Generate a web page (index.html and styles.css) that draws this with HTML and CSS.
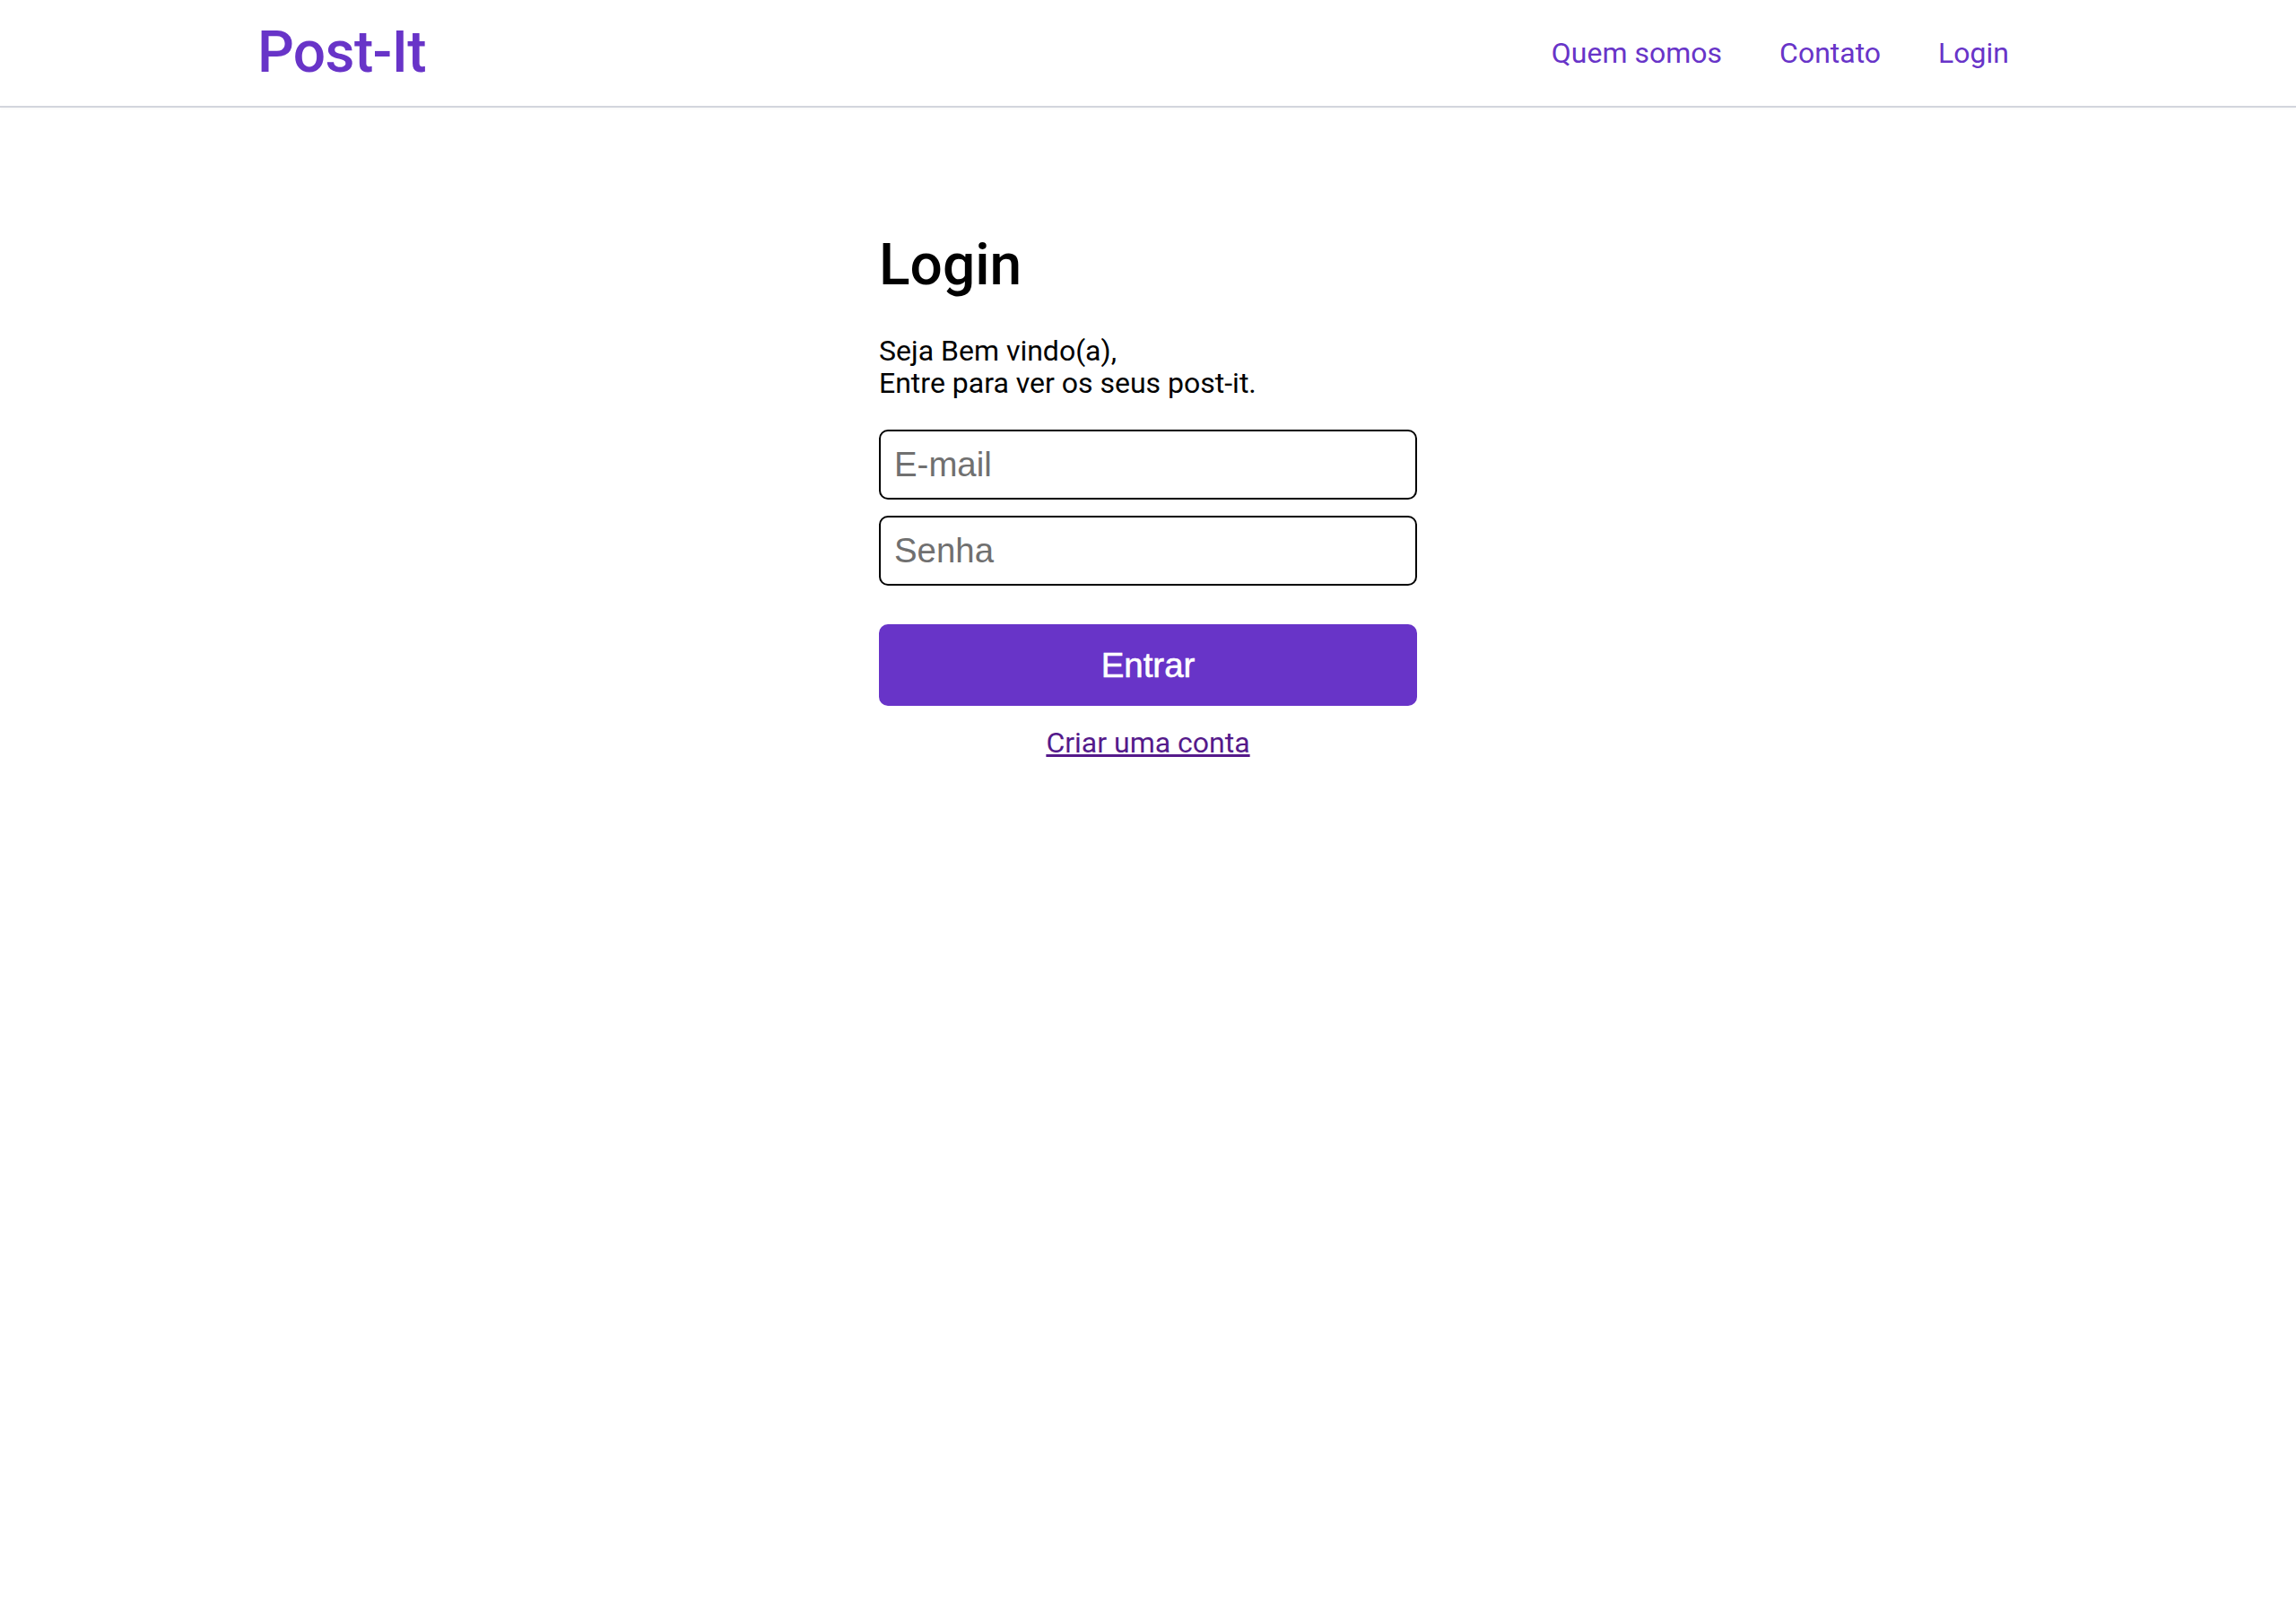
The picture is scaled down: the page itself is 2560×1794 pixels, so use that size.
FILE: index.html
```html
<!DOCTYPE html>
<html lang="pt-BR">
<head>
<meta charset="utf-8">
<title>Post-It | Login</title>
<link rel="stylesheet" href="styles.css">
</head>
<body>
<header class="topbar">
  <div class="topbar-inner">
    <a class="logo" href="#">Post-It</a>
    <nav class="nav">
      <a class="nav-link" href="#">Quem somos</a>
      <a class="nav-link" href="#">Contato</a>
      <a class="nav-link" href="#">Login</a>
    </nav>
  </div>
</header>
<main class="page">
  <section class="login">
    <h1 class="login-title">Login</h1>
    <p class="login-text">Seja Bem vindo(a),<br>Entre para ver os seus post-it.</p>
    <form class="login-form">
      <input class="field" type="email" placeholder="E-mail">
      <input class="field" type="password" placeholder="Senha">
      <button class="btn" type="button">Entrar</button>
    </form>
    <a class="signup" href="#">Criar uma conta</a>
  </section>
</main>
</body>
</html>
```
FILE: styles.css
```css
* { box-sizing: border-box; }

html, body {
  margin: 0;
  padding: 0;
  background: #ffffff;
}

body {
  font-family: Roboto, "Liberation Sans", Arial, sans-serif;
  color: #000;
}

.topbar {
  height: 120px;
  border-bottom: 2px solid #d3d5dd;
  box-shadow: 0 1px 3px rgba(0, 0, 0, 0.04);
}

.topbar-inner {
  height: 100%;
  display: flex;
  align-items: center;
  justify-content: space-between;
  padding: 0 320px 0 287px;
}

.logo {
  font-size: 64px;
  font-weight: 500;
  letter-spacing: -0.6px;
  color: #6834c8;
  text-decoration: none;
  line-height: 1;
}

.nav {
  display: flex;
  gap: 64px;
  align-items: center;
}

.nav-link {
  font-size: 32px;
  color: #6834c8;
  text-decoration: none;
}

.page {
  display: flex;
  justify-content: center;
}

.login {
  width: 600px;
  display: flex;
  flex-direction: column;
  padding-top: 138px;
}

.login-title {
  margin: 0;
  font-size: 64px;
  font-weight: 500;
  line-height: normal;
}

.login-text {
  margin: 40px 0 0;
  font-size: 32px;
  line-height: 36px;
}

.login-form {
  margin-top: 34px;
  display: flex;
  flex-direction: column;
}

.field {
  height: 78px;
  width: 100%;
  border: 2px solid #000;
  border-radius: 10px;
  padding: 0 15px;
  font-family: "Liberation Sans", Arial, sans-serif;
  font-size: 38.4px;
  color: #000;
  outline: none;
  background: #fff;
}

.field + .field {
  margin-top: 18px;
}

.field::placeholder {
  color: #707070;
}

.btn {
  margin-top: 43px;
  height: 91px;
  width: 100%;
  border: none;
  border-radius: 10px;
  background: #6834c8;
  color: #fff;
  font-family: "Liberation Sans", Arial, sans-serif;
  font-size: 38.4px;
  -webkit-text-stroke: 0.6px #fff;
  cursor: pointer;
}

.signup {
  align-self: center;
  margin-top: 22px;
  font-size: 32px;
  color: #551a8b;
  text-decoration: underline;
}
```
